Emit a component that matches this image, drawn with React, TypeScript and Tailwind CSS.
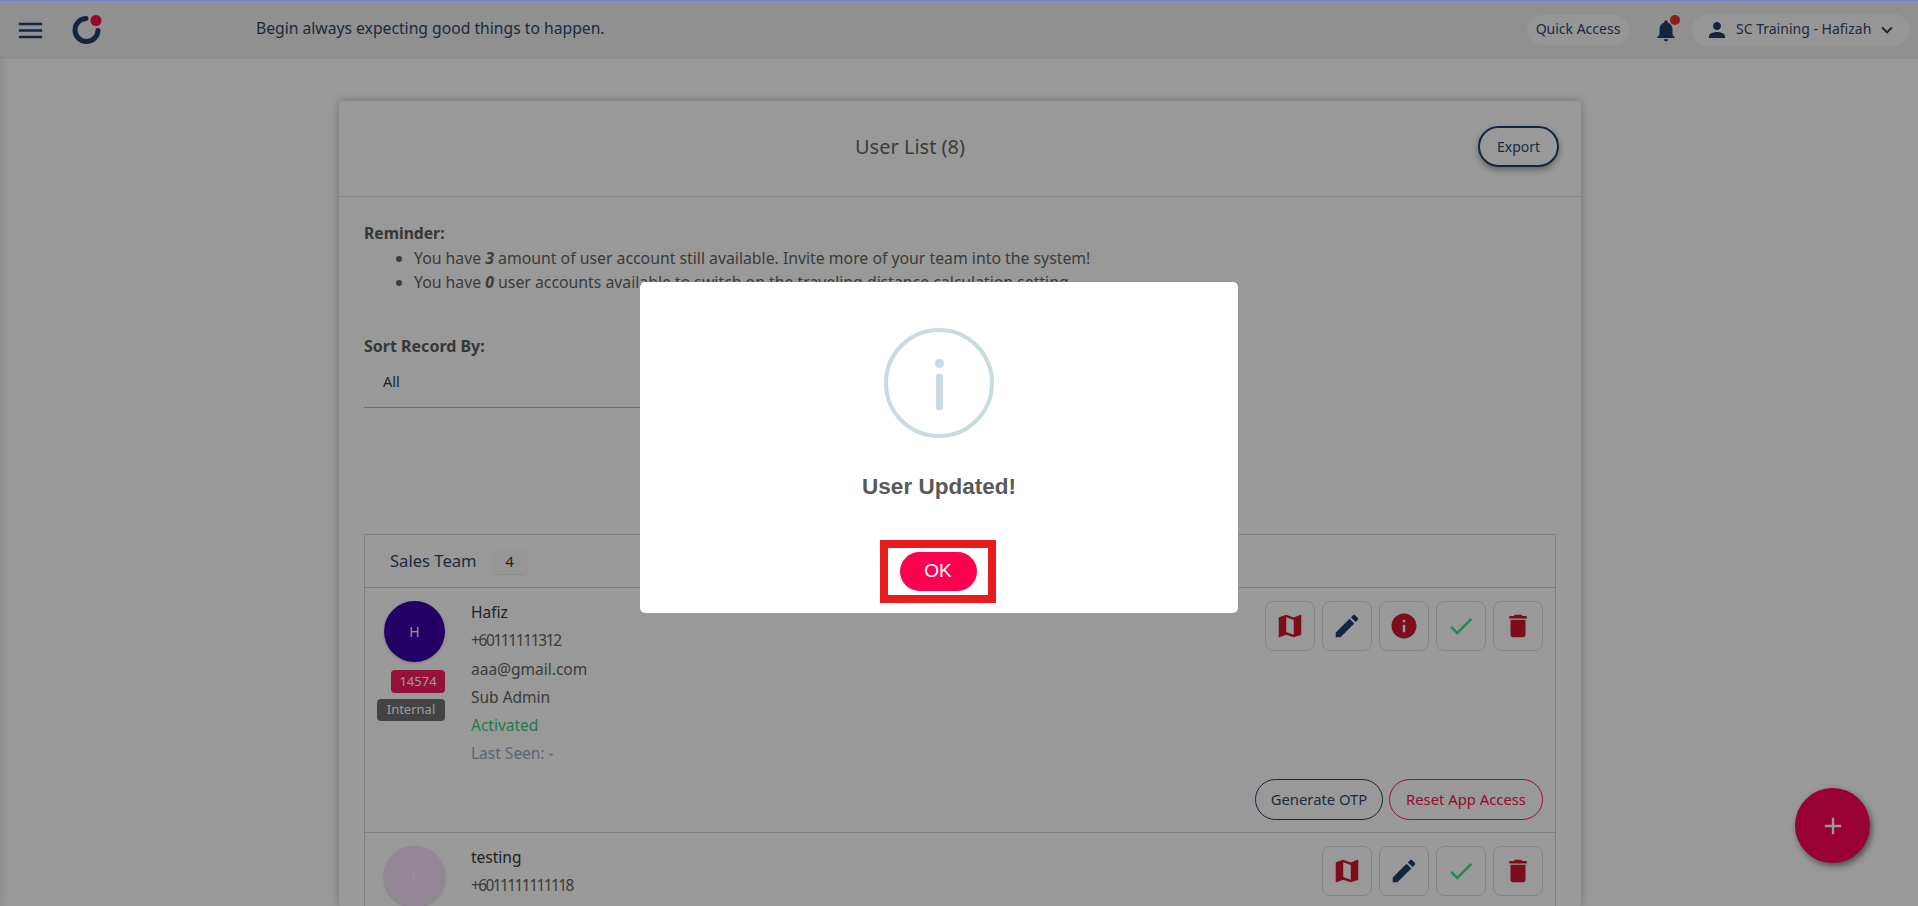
import { MdMenu, MdNotifications, MdPerson, MdKeyboardArrowDown, MdMap, MdEdit, MdInfo, MdCheck, MdDelete, MdAdd } from "react-icons/md"

function IconBtn({ children }: any) {
  return (
    <button className="w-[50px] h-[50px] flex items-center justify-center rounded-lg border border-[#dcdcdc]">
      {children}
    </button>
  )
}

function Actions({ info }: { info?: boolean }) {
  return (
    <div className="flex gap-[7px]">
      <IconBtn><MdMap size={30} className="text-[#d1152f]" /></IconBtn>
      <IconBtn><MdEdit size={30} className="text-[#213f69]" /></IconBtn>
      {info && <IconBtn><MdInfo size={30} className="text-[#d1152f]" /></IconBtn>}
      <IconBtn><MdCheck size={30} className="text-[#3ce68a]" /></IconBtn>
      <IconBtn><MdDelete size={30} className="text-[#d1152f]" /></IconBtn>
    </div>
  )
}

export default function App() {
  return (
    <div className="relative h-[906px] w-[1918px] overflow-hidden bg-white text-[#646464] font-['Noto_Sans',sans-serif]">
      {/* top bar */}
      <header className="h-[59px] flex items-center bg-[#f0f0f0] border-t border-[#7b7fd0] pl-[15px] pr-2">
        <MdMenu size={31} className="text-[#213f69]" />
        <svg width="30" height="29" viewBox="0 0 30 29" className="ml-[26px] mb-[1px]">
          <path d="M14 3.5A11.5 11.5 0 1 0 26 15.5" fill="none" stroke="#213f69" strokeWidth="5" strokeLinecap="round" />
          <circle cx="24" cy="5.5" r="5.5" fill="#ff0a50" />
        </svg>
        <span className="ml-[154px] mb-[2px] text-[15.7px] text-[#33476a]">Begin always expecting good things to happen.</span>
        <div className="ml-auto flex items-center">
          <button className="h-[30px] w-[102px] pb-[3px] rounded-full bg-[#fafafa] text-[14px] text-[#33476a]">Quick Access</button>
          <div className="relative ml-[24px] w-[26px] flex justify-center">
            <MdNotifications size={31} className="text-[#213f69]" />
            <span className="absolute right-[-1px] top-0 w-[10px] h-[10px] rounded-full bg-[#e8302a]" />
          </div>
          <div className="ml-[13px] h-[32px] w-[218px] rounded-full bg-[#fafafa] flex items-center pl-[13px] text-[14px] text-[#33476a]">
            <MdPerson size={24} className="text-[#213f69]" />
            <span className="ml-[7px] mb-[3px]">SC Training - Hafizah</span>
            <MdKeyboardArrowDown size={22} className="ml-auto mr-[12px] text-[#213f69]" />
          </div>
        </div>
      </header>

      {/* sidebar edge */}
      <div className="absolute left-0 top-[59px] bottom-0 w-0 shadow-[0_0_6px_1px_rgba(0,0,0,0.25)]" />

      {/* page */}
      <main className="pt-[42px] pl-[339px]">
        <div className="w-[1242px] bg-white rounded-sm shadow-[0_0_10px_rgba(0,0,0,0.25)]">
          <div className="h-[96px] relative flex items-center justify-center border-b border-[#dedede]">
            <span className="text-[20px] mr-[100px] mb-[3px]">User List (8)</span>
            <button className="absolute right-[22px] top-[25px] w-[81px] h-[41px] rounded-full border-2 border-[#213f69] text-[14px] text-[#33476a] shadow-[0_3px_6px_rgba(0,0,0,0.35)]">Export</button>
          </div>

          <div className="pt-[24px] px-[25px]">
            <p className="font-bold text-[15.7px] leading-[24px] text-[#5c5c5c]">Reminder:</p>
            <ul className="mt-[1px] list-disc pl-[50px] text-[15.8px] leading-[24px]">
              <li>You have <b><i>3</i></b> amount of user account still available. Invite more of your team into the system!</li>
              <li>You have <b><i>0</i></b> user accounts available to switch on the traveling distance calculation setting.</li>
            </ul>

            <p className="mt-[40px] font-bold text-[16px] leading-[24px] text-[#5c5c5c]">Sort Record By:</p>
            <div className="mt-[13px] w-[600px] h-[37px] pl-[19px] border-b border-[#bdbdbd] text-[14.5px] text-[#393939]">All</div>

            <section className="mt-[126px] border border-[#d6d6d6] border-b-0">
              <div className="h-[53px] flex items-center pl-[25px] border-b border-[#d6d6d6]">
                <span className="text-[16.6px] text-[#33476a]">Sales Team</span>
                <span className="ml-[16px] w-[34px] h-[25px] flex items-center justify-center rounded bg-[#fafafa] text-[15px] text-[#393939] shadow-[0_1px_2px_rgba(0,0,0,0.1)]">4</span>
              </div>

              {/* Hafiz */}
              <div className="h-[245px] flex border-b border-[#d6d6d6] pl-[12px] pr-[12px] pt-[13px]">
                <div className="w-[68px] flex flex-col items-end">
                  <div className="w-[61px] h-[61px] rounded-full bg-[#3c00aa] text-[#f0f0f0] text-[14px] flex items-center justify-center shadow-[0_1px_3px_rgba(0,0,0,0.2)]">H</div>
                  <span className="mt-[8px] w-[54px] h-[23px] rounded-sm bg-[#fa1b5f] text-white text-[13px] flex items-center justify-center">14574</span>
                  <span className="mt-[6px] w-[68px] h-[22px] rounded-sm bg-[#707070] text-white text-[13px] flex items-center justify-center">Internal</span>
                </div>
                <div className="ml-[26px] -mt-[3px] text-[15.5px] leading-[28.3px] text-[#646464]">
                  <p className="text-[#393939]">Hafiz</p>
                  <p className="tracking-[-1.4px]">+60111111312</p>
                  <p>aaa@gmail.com</p>
                  <p>Sub Admin</p>
                  <p className="text-[#38ce7e]">Activated</p>
                  <p className="text-[#9aabc0]">Last Seen: -</p>
                </div>
                <div className="ml-auto flex flex-col items-end">
                  <Actions info />
                  <div className="mt-[128px] flex gap-[6px] text-[14.8px]">
                    <button className="w-[128px] h-[41px] rounded-full border border-[#213f69] text-[#33476a]">Generate OTP</button>
                    <button className="w-[154px] h-[41px] rounded-full border border-[#fa1b5f] text-[#f5124f]">Reset App Access</button>
                  </div>
                </div>
              </div>

              {/* testing */}
              <div className="flex pl-[12px] pr-[12px] pt-[13px]">
                <div className="w-[68px] flex flex-col items-end">
                  <div className="w-[61px] h-[61px] rounded-full bg-[#f6e2f8] text-[#fbf3fb] text-[14px] flex items-center justify-center shadow-[0_1px_3px_rgba(0,0,0,0.2)]">t</div>
                </div>
                <div className="ml-[26px] -mt-[3px] text-[15.5px] leading-[28.3px] text-[#646464]">
                  <p className="text-[#393939]">testing</p>
                  <p className="tracking-[-1.6px]">+6011111111118</p>
                </div>
                <div className="ml-auto"><Actions /></div>
              </div>
            </section>
          </div>
        </div>
      </main>

      {/* add button */}
      <button className="absolute left-[1795px] top-[788px] w-[75px] h-[75px] rounded-full bg-[#ff0055] text-white flex items-center justify-center shadow-[2px_3px_6px_rgba(0,0,0,0.5)]">
        <MdAdd size={28} />
      </button>

      {/* dialog */}
      <div className="absolute inset-0 top-px bg-black/40" />
      <div className="absolute left-[640px] top-[282px] w-[598px] h-[331px] rounded-[5px] bg-white flex flex-col items-center font-['Liberation_Sans',sans-serif]">
        <div className="mt-[46px] w-[110px] h-[110px] rounded-full border-[4px] border-[#c9dae1] flex flex-col items-center">
          <span className="mt-[27px] w-[9px] h-[9px] rounded-full bg-[#c9dae1]" />
          <span className="mt-[6px] w-[7px] h-[36px] rounded-[2px] bg-[#c9dae1]" />
        </div>
        <h2 className="mt-[36px] text-[22.5px] leading-[26px] font-bold text-[#595959]">User Updated!</h2>
        <div className="mt-[40px] mr-[2px] w-[116px] h-[63px] border-[8px] border-[#e81c1f] flex items-start justify-center pt-[4px]">
          <button className="w-[77px] h-[39px] rounded-full bg-[#ff0050] text-white text-[19px]">OK</button>
        </div>
      </div>
    </div>
  )
}
